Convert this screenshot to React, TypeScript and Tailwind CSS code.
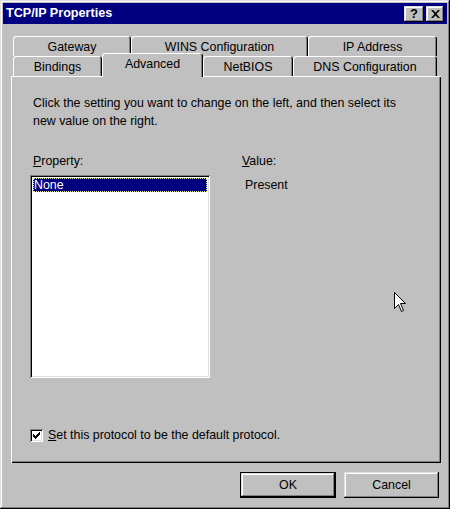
import React from "react";

const raised =
  "shadow-[inset_-1px_-1px_0_#000,inset_1px_1px_0_#dfdfdf,inset_-2px_-2px_0_#808080,inset_2px_2px_0_#fff]";

function Tab({ w, label, selected }: { w: string; label: string; selected?: boolean }) {
  if (selected) {
    return (
      <div
        className={`${w} relative z-10 -mt-[3px] h-[24px] shrink-0 rounded-t-[3px] bg-[#c0c0c0] flex items-start justify-center pt-[5px] shadow-[inset_1px_1px_0_#fff,inset_-1px_0_0_#000,inset_-2px_0_0_#808080]`}
      >
        {label}
      </div>
    );
  }
  return (
    <div
      className={`${w} h-[20px] shrink-0 rounded-t-[3px] bg-[#c0c0c0] flex items-center justify-center pt-[2px] shadow-[inset_1px_1px_0_#fff,inset_-1px_0_0_#000,inset_-2px_0_0_#808080]`}
    >
      {label}
    </div>
  );
}

export default function App() {
  return (
    <div
      className={`relative w-[450px] h-[509px] bg-[#c0c0c0] p-[3px] flex flex-col text-black text-[12.4px] leading-none font-['Liberation_Sans',Arial,sans-serif] ${raised}`}
    >
      {/* Title bar */}
      <div className="h-[21px] bg-[#000080] flex items-center pl-[3px] pr-[3px] shrink-0">
        <span className="text-white font-bold text-[12.6px]">TCP/IP Properties</span>
        <div className="ml-auto flex items-center gap-[2px]">
          <div className={`w-[20px] h-[16px] bg-[#c0c0c0] flex items-center justify-center font-bold text-[13px] ${raised}`}>
            ?
          </div>
          <div className={`w-[18px] h-[16px] bg-[#c0c0c0] flex items-center justify-center ${raised}`}>
            <svg width="9" height="8" viewBox="0 0 9 8">
              <path d="M0 0h2l2.5 2.5L7 0h2L5.5 4 9 8H7L4.5 5.5 2 8H0l3.5-4z" fill="#000" />
            </svg>
          </div>
        </div>
      </div>

      {/* Body */}
      <div className="flex flex-col pl-[8px] pr-[6px]">
        {/* Tabs */}
        <div className="mt-[12px] ml-[2px] flex">
          <Tab w="w-[118px]" label="Gateway" />
          <Tab w="w-[177px]" label="WINS Configuration" />
          <Tab w="w-[129px]" label="IP Address" />
        </div>
        <div className="ml-[2px] flex items-start h-[20px]">
          <Tab w="w-[89px]" label="Bindings" />
          <Tab w="w-[101px]" label="Advanced" selected />
          <Tab w="w-[90px]" label="NetBIOS" />
          <Tab w="w-[144px]" label="DNS Configuration" />
        </div>

        {/* Panel */}
        <div className="w-[430px] h-[387px] bg-[#c0c0c0] shadow-[inset_1px_1px_0_#fff,inset_-1px_-1px_0_#000,inset_-2px_-2px_0_#808080] flex flex-col px-[19px] pt-[18px]">
          <div className="ml-[3px] leading-[18px]">
            Click the setting you want to change on the left, and then select its
            <br />
            new value on the right.
          </div>

          <div className="mt-[22px] flex">
            <div className="w-[212px] shrink-0 flex flex-col">
              <div className="ml-[3px] h-[18px] flex items-center">
                <span>
                  <u>P</u>roperty:
                </span>
              </div>
              <div className="mt-[5px] w-[180px] h-[203px] bg-white p-[2px] shadow-[inset_1px_1px_0_#808080,inset_-1px_-1px_0_#fff,inset_2px_2px_0_#000,inset_-2px_-2px_0_#dfdfdf]">
                <div className="mt-[1px] ml-[1px] mr-[1px] h-[14px] bg-[#000080] text-white flex items-center pl-[1px] outline-1 outline-dotted outline-[#e8e890] -outline-offset-1">
                  None
                </div>
              </div>
            </div>
            <div className="flex flex-col">
              <div className="h-[18px] flex items-center">
                <span>
                  <u>V</u>alue:
                </span>
              </div>
              <div className="mt-[8px] ml-[3px] h-[14px] flex items-center">Present</div>
            </div>
          </div>

          <div className="mt-[51px] flex items-center">
            <div className="w-[13px] h-[13px] bg-white shrink-0 flex items-center justify-center shadow-[inset_1px_1px_0_#808080,inset_-1px_-1px_0_#fff,inset_2px_2px_0_#000,inset_-2px_-2px_0_#dfdfdf]">
              <svg width="7" height="7" viewBox="0 0 7 7">
                <path d="M0 2h1v1h1v1h1V3h1V2h1V1h1V0h1v3H6v1H5v1H4v1H3v1H2V6H1V5H0z" fill="#000" />
              </svg>
            </div>
            <span className="ml-[5px]">
              <u>S</u>et this protocol to be the default protocol.
            </span>
          </div>
        </div>

        {/* Buttons */}
        <div className="mt-[9px] flex justify-end gap-[8px] pr-[2px]">
          <div className="w-[96px] h-[26px] border border-black">
            <div className={`w-full h-full bg-[#c0c0c0] flex items-center justify-center ${raised}`}>OK</div>
          </div>
          <div className={`w-[95px] h-[26px] bg-[#c0c0c0] flex items-center justify-center ${raised}`}>
            Cancel
          </div>
        </div>
      </div>

      {/* Mouse cursor */}
      <svg className="absolute left-[394px] top-[292px]" width="13" height="21" viewBox="0 0 13 21">
        <path
          d="M0.5 0.5 L0.5 16.5 L4.5 12.5 L7.5 19.5 L9.5 18.5 L6.5 11.5 L11.5 11.5 Z"
          fill="#fff"
          stroke="#000"
          strokeWidth="1"
        />
      </svg>
    </div>
  );
}
